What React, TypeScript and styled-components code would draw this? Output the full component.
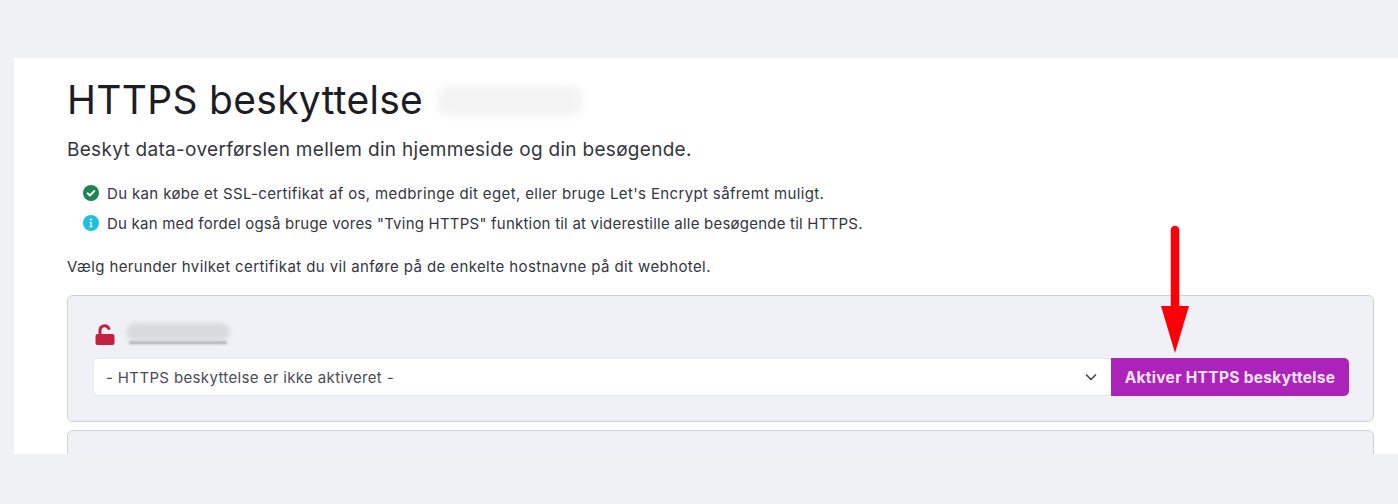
import React from "react";
import styled, { createGlobalStyle } from "styled-components";

const Global = createGlobalStyle`
  html, body { margin: 0; padding: 0; background: #f0f1f4; }
  body { font-family: Inter, "Liberation Sans", sans-serif; color: #2d2f36; }
`;

const Page = styled.div`
  width: 1398px;
  height: 504px;
  padding: 58px 0 50px 14px;
  box-sizing: border-box;
  position: relative;
  overflow: hidden;
`;

const Panel = styled.main`
  background: #fff;
  height: 396px;
  padding: 16px 24px 0 53px;
  box-sizing: border-box;
  overflow: hidden;
`;

const TitleRow = styled.div`
  display: flex;
  align-items: center;
  height: 52px;
  gap: 14px;
`;

const Title = styled.h1`
  margin: 0;
  font-size: 39px;
  font-weight: 400;
  line-height: 52px;
  color: #1d1e25;
  letter-spacing: 0.3px;
`;

const Smudge = styled.span<{ $w: number; $h: number; $bg: string; $blur: number }>`
  display: block;
  width: ${(p) => p.$w}px;
  height: ${(p) => p.$h}px;
  background: ${(p) => p.$bg};
  border-radius: 12px;
  filter: blur(${(p) => p.$blur}px);
`;

const Lead = styled.p`
  margin: 11px 0 0;
  font-size: 19px;
  line-height: 26px;
  letter-spacing: 0.3px;
  color: #34363d;
`;

const Notes = styled.ul`
  list-style: none;
  margin: 20px 0 0;
  padding: 0 0 0 16px;
  display: flex;
  flex-direction: column;
  gap: 10px;
`;

const Note = styled.li<{ $track: number }>`
  display: flex;
  align-items: center;
  gap: 8px;
  height: 20px;
  font-size: 15px;
  letter-spacing: ${(p) => p.$track}px;
  color: #34363d;
`;

const Hint = styled.p`
  margin: 24px 0 0;
  font-size: 15px;
  line-height: 20px;
  letter-spacing: 0.4px;
  color: #34363d;
`;

const Card = styled.section`
  margin-top: 18px;
  height: 127px;
  box-sizing: border-box;
  background: #f0f1f7;
  border: 1px solid #cfd1d8;
  border-radius: 6px;
  padding: 25px 24px 0 25px;
`;

const NextCard = styled(Card)`
  margin-top: 8px;
  height: 60px;
`;

const HostRow = styled.div`
  display: flex;
  align-items: center;
  gap: 11px;
  height: 26px;
  padding-left: 2px;
`;

const HostName = styled.div`
  position: relative;
  width: 104px;
  height: 22px;
`;

const HostBlur = styled(Smudge)`
  position: absolute;
  left: 0;
  top: 0;
`;

const HostTrace = styled(Smudge)`
  position: absolute;
  left: 3px;
  bottom: 1px;
`;

const Control = styled.div`
  display: flex;
  margin-top: 11px;
  height: 38px;
`;

const SelectBox = styled.div`
  flex: 1;
  display: flex;
  align-items: center;
  justify-content: space-between;
  padding: 0 13px 0 12px;
  background: #fff;
  border: 1px solid #e6e7ec;
  border-right: 0;
  border-radius: 5px 0 0 5px;
  font-size: 15px;
  letter-spacing: 0.36px;
  color: #4a4c53;
`;

const ActionButton = styled.button`
  width: 238px;
  border: 0;
  border-radius: 0 5px 5px 0;
  background: #ab23b8;
  color: #f6e4f8;
  font-family: Inter, "Liberation Sans", sans-serif;
  font-weight: 700;
  font-size: 15.5px;
  letter-spacing: 0.3px;
  padding: 0;
`;

const Arrow = styled.svg`
  position: absolute;
  left: 1160px;
  top: 225px;
`;

export default function App() {
  return (
    <Page>
      <Global />
      <Panel>
        <TitleRow>
          <Title>HTTPS beskyttelse</Title>
          <Smudge $w={146} $h={29} $bg="#f3f3f4" $blur={4} />
        </TitleRow>
        <Lead>Beskyt data-overførslen mellem din hjemmeside og din besøgende.</Lead>
        <Notes>
          <Note $track={0.36}>
            <svg width="16" height="16" viewBox="0 0 16 16">
              <circle cx="8" cy="8" r="8" fill="#1f8354" />
              <path d="M4.6 8.3l2.3 2.2 4.4-4.5" fill="none" stroke="#fff" strokeWidth="1.9" strokeLinecap="round" strokeLinejoin="round" />
            </svg>
            Du kan købe et SSL-certifikat af os, medbringe dit eget, eller bruge Let's Encrypt såfremt muligt.
          </Note>
          <Note $track={0.22}>
            <svg width="16" height="16" viewBox="0 0 16 16">
              <circle cx="8" cy="8" r="8" fill="#20bfe0" />
              <circle cx="8" cy="4.6" r="1.2" fill="#fff" />
              <path d="M6.6 7h2.1v4.2h.9v1H6.4v-1h1V8h-.8z" fill="#fff" />
            </svg>
            Du kan med fordel også bruge vores "Tving HTTPS" funktion til at viderestille alle besøgende til HTTPS.
          </Note>
        </Notes>
        <Hint>Vælg herunder hvilket certifikat du vil anføre på de enkelte hostnavne på dit webhotel.</Hint>
        <Card>
          <HostRow>
            <svg width="20" height="21" viewBox="0 0 20 21">
              <path d="M5 11V6.4a4.6 4.6 0 0 1 8.8-1.9" fill="none" stroke="#c3203f" strokeWidth="3" strokeLinecap="round" />
              <rect x="0.5" y="10" width="19" height="11" rx="2" fill="#c3203f" />
            </svg>
            <HostName>
              <HostTrace $w={98} $h={3} $bg="#a4a6ac" $blur={1} />
              <HostBlur $w={104} $h={18} $bg="#d9dade" $blur={2} />
            </HostName>
          </HostRow>
          <Control>
            <SelectBox>
              - HTTPS beskyttelse er ikke aktiveret -
              <svg width="14" height="14" viewBox="0 0 14 14">
                <path d="M2.5 5l4.5 4.5L11.5 5" fill="none" stroke="#4a4c53" strokeWidth="1.7" strokeLinecap="round" strokeLinejoin="round" />
              </svg>
            </SelectBox>
            <ActionButton>Aktiver HTTPS beskyttelse</ActionButton>
          </Control>
        </Card>
        <NextCard />
      </Panel>
      <Arrow width="30" height="130" viewBox="0 0 30 130">
        <path d="M15 5v90" stroke="#fb0007" strokeWidth="8.5" strokeLinecap="round" />
        <path d="M1 81h28l-14 47z" fill="#fb0007" />
      </Arrow>
    </Page>
  );
}
